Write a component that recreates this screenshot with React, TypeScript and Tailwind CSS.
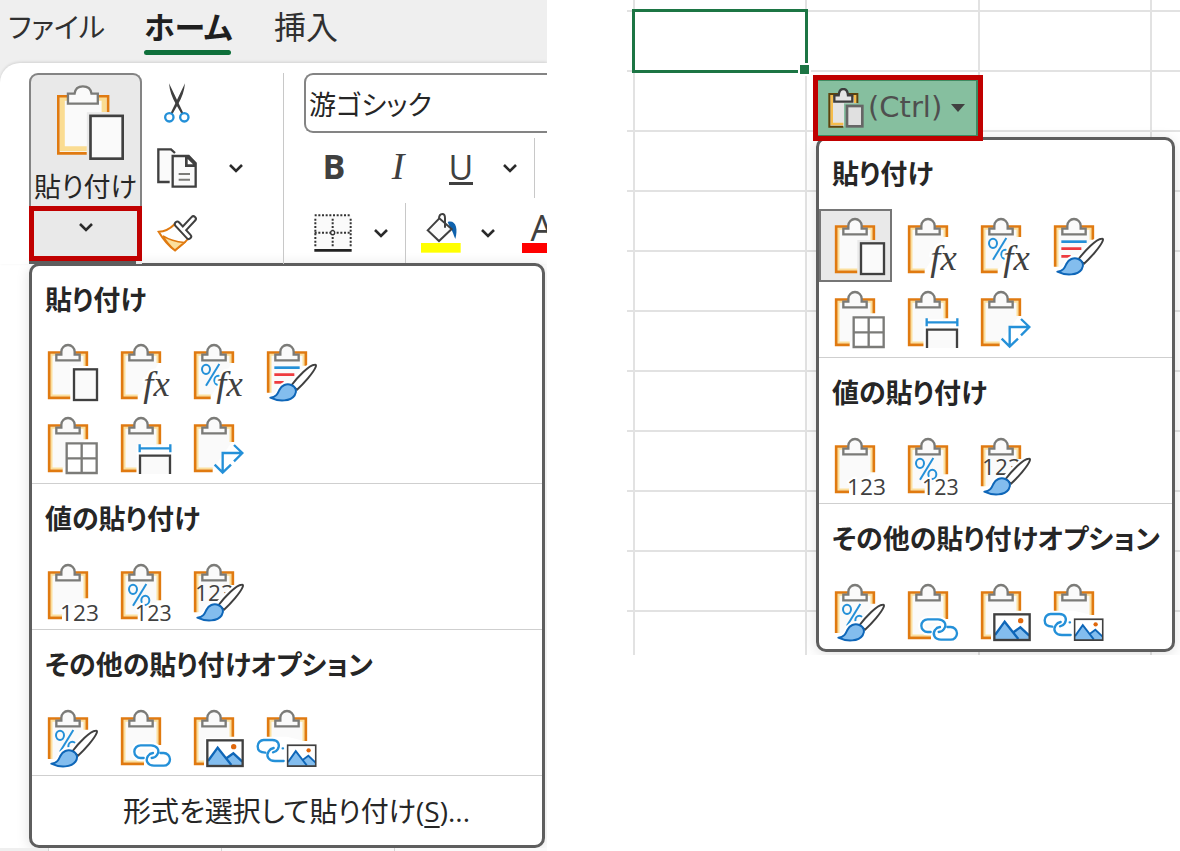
import React from "react";

const ORANGE = "#e07a10";
const YELLOW = "#fbdf9d";
const DARK = "#404040";
const BLUE = "#2490d8";
const GRAY = "#7b7b78";
const PAPER = "#fafafa";

type BoardProps = { right?: number; bottom?: number; left?: number };

function Board({ right = 165, bottom = 0, left = 165 }: BoardProps) {
  const tail = bottom > 0;
  const outer = tail ? `M${bottom} 164.500H3.500V28.500H116.500V${right}` : `M3.500 ${left}V28.500H116.500V${right}`;
  const inner = tail ? `M${bottom} 158H10V35H110V${right}` : `M10 ${left}V35H110V${right}`;
  return (
    <>
      <path d={`M7 ${left}V32H113V${right}L${bottom || 60} ${tail ? 161 : left}Z`} fill={PAPER} />
      <path d={inner} fill="none" stroke={YELLOW} strokeWidth="7" />
      <path d={outer} fill="none" stroke={ORANGE} strokeWidth="8" />
      <path d="M25 52V35H40V26a20 20 0 0 1 40 0V35H95V52Z" fill={PAPER} stroke={GRAY} strokeWidth="7" />
    </>
  );
}

function Brush() {
  return (
    <>
      <path
        d="M8 163C28 162 30 150 36 140C42 126 60 118 72 122L100 92C118 74 138 60 147 66C152 74 136 96 122 110L92 140C90 150 88 155 80 162C62 178 30 174 8 163Z"
        fill="currentColor"
        stroke="currentColor"
        strokeWidth="14"
      />
      <path
        d="M74 126C92 102 126 66 143 65Q149 64 146 72C140 88 110 122 90 140Z"
        fill="#fff"
        stroke={DARK}
        strokeWidth="6"
        strokeLinejoin="round"
      />
      <path
        d="M10 164C28 162 32 152 37 141C43 127 59 120 73 126C87 132 91 145 83 157C71 175 36 177 10 164Z"
        fill="#83bdee"
        stroke="#0e66b8"
        strokeWidth="6"
        strokeLinejoin="round"
      />
    </>
  );
}

function Percent() {
  return (
    <g fill="none" stroke={BLUE} strokeWidth="6">
      <ellipse cx="36" cy="79" rx="12" ry="14" />
      <path d="M76 63L36 128" />
      <ellipse cx="73" cy="112" rx="12" ry="14" />
    </g>
  );
}

function Fx() {
  return (
    <text
      x="67"
      y="160"
      className="font-['Liberation_Serif',serif] italic"
      fontSize="110"
      fill={DARK}
      stroke="currentColor"
      strokeWidth="14"
      paintOrder="stroke"
    >
      fx
    </text>
  );
}

function Digits({ x, y, size }: { x: number; y: number; size: number }) {
  return (
    <text
      x={x}
      y={y}
      className="font-['Open_Sans',sans-serif]"
      fontSize={size}
      fill={DARK}
      stroke="currentColor"
      strokeWidth="12"
      paintOrder="stroke"
    >
      123
    </text>
  );
}

function Chain() {
  return (
    <g fill="none" strokeLinecap="round">
      <g stroke="currentColor" strokeWidth="20">
        <path d="M70 147H59a19 19 0 0 1 0-38H92a19 19 0 0 1 0 38H88" />
        <path d="M116 132H128a19 19 0 0 1 0 38H97a19 19 0 0 1 0-38H100" />
      </g>
      <g stroke={BLUE} strokeWidth="7">
        <path d="M68 147H59a19 19 0 0 1 0-38H90C108 109 118 124 108 138Q103 146 92 147" />
        <path d="M118 132H128a19 19 0 0 1 0 38H99C80 170 72 154 81 141Q86 133 96 132" />
      </g>
    </g>
  );
}

function Landscape() {
  return (
    <>
      <rect x="32" y="86" width="122" height="92" fill="currentColor" />
      <rect x="40" y="94" width="106" height="77" fill="#fff" />
      <path d="M42 158L71 116L98 150L118 133L145 158V170H42Z" fill="#83bdee" />
      <path d="M42 156L71 116L112 168M94 150L118 133L145 158" fill="none" stroke="#0e66b8" strokeWidth="7" />
      <rect x="40" y="94" width="106" height="77" fill="none" stroke={DARK} strokeWidth="7" />
      <circle cx="119" cy="113" r="8" fill="#e0680c" />
    </>
  );
}

type Kind =
  | "paste"
  | "formulas"
  | "formulasNumber"
  | "keepSource"
  | "noBorders"
  | "columnWidths"
  | "transpose"
  | "values"
  | "valuesNumber"
  | "valuesSource"
  | "formatting"
  | "link"
  | "picture"
  | "linkedPicture";

function PasteIcon({ kind }: { kind: Kind }) {
  return (
    <svg viewBox="0 0 150 174" className="h-[58px] w-[50px] overflow-visible" aria-hidden="true">
      {kind === "paste" && (
        <>
          <Board right={69} bottom={68} />
          <rect x="67" y="69" width="85" height="105" fill="currentColor" />
          <rect x="78" y="79" width="69" height="92" fill={PAPER} stroke={DARK} strokeWidth="7" />
        </>
      )}
      {kind === "formulas" && (
        <>
          <Board right={60} bottom={50} />
          <Fx />
        </>
      )}
      {kind === "formulasNumber" && (
        <>
          <Board right={60} bottom={50} />
          <Percent />
          <Fx />
        </>
      )}
      {kind === "keepSource" && (
        <>
          <Board right={68} left={149} />
          <path d="M22 74H98" stroke={BLUE} strokeWidth="8" />
          <path d="M22 95H82M22 118H50" stroke="#ee3b3f" strokeWidth="8" />
          <Brush />
        </>
      )}
      {kind === "noBorders" && (
        <>
          <Board right={70} bottom={44} />
          <path d="M56 82H146V171H56ZM101 82V171M56 127H146" fill="#fff" stroke={GRAY} strokeWidth="7" />
        </>
      )}
      {kind === "columnWidths" && (
        <>
          <Board right={85} bottom={47} />
          <path d="M47 88H106V112H150V174H47Z" fill="currentColor" />
          <path d="M57 174V119H147V174" fill={PAPER} stroke={DARK} strokeWidth="7" />
          <path d="M56 97H148M56 85V109M148 85V109" stroke={BLUE} strokeWidth="7" />
        </>
      )}
      {kind === "transpose" && (
        <>
          <Board right={78} bottom={56} />
          <path d="M86 168V111H146M120 87L145 111L120 136M62 146L86 170L111 146" fill="none" stroke={BLUE} strokeWidth="7" />
        </>
      )}
      {kind === "values" && (
        <>
          <Board right={106} bottom={42} />
          <Digits x={36} y={174} size={68} />
        </>
      )}
      {kind === "valuesNumber" && (
        <>
          <Board right={112} bottom={50} />
          <Percent />
          <Digits x={42} y={174} size={64} />
        </>
      )}
      {kind === "valuesSource" && (
        <>
          <Board right={66} left={148} />
          <text x="3" y="114" className="font-['Open_Sans',sans-serif]" fontSize="68" fill={DARK}>
            123
          </text>
          <Brush />
        </>
      )}
      {kind === "formatting" && (
        <>
          <Board right={62} left={150} />
          <Percent />
          <Brush />
        </>
      )}
      {kind === "link" && (
        <>
          <Board right={108} bottom={69} />
          <Chain />
        </>
      )}
      {kind === "picture" && (
        <>
          <Board right={83} bottom={30} />
          <Landscape />
        </>
      )}
      {kind === "linkedPicture" && (
        <>
          <Board right={96} left={83} />
          <g fill="none" stroke={BLUE} strokeWidth="7" strokeLinecap="round">
            <path d="M-5 131C-22 131-28 122-28 112S-20 93-10 93H16C34 93 40 108 32 121Q28 128 18 130" />
            <path d="M50 156H24C4 156-4 141 5 127Q10 119 20 117M47 118H48" />
          </g>
          <svg x="59" y="106" width="90" height="68" viewBox="37 91 112 83" preserveAspectRatio="none">
            <Landscape />
          </svg>
        </>
      )}
    </svg>
  );
}

const SECTIONS: { title: string; items: { kind: Kind; label: string }[] }[] = [
  {
    title: "貼り付け",
    items: [
      { kind: "paste", label: "貼り付け" },
      { kind: "formulas", label: "数式" },
      { kind: "formulasNumber", label: "数式と数値の書式" },
      { kind: "keepSource", label: "元の書式を保持" },
      { kind: "noBorders", label: "罫線なし" },
      { kind: "columnWidths", label: "元の列幅を保持" },
      { kind: "transpose", label: "行/列の入れ替え" },
    ],
  },
  {
    title: "値の貼り付け",
    items: [
      { kind: "values", label: "値" },
      { kind: "valuesNumber", label: "値と数値の書式" },
      { kind: "valuesSource", label: "値と元の書式" },
    ],
  },
  {
    title: "その他の貼り付けオプション",
    items: [
      { kind: "formatting", label: "書式設定" },
      { kind: "link", label: "リンク貼り付け" },
      { kind: "picture", label: "図" },
      { kind: "linkedPicture", label: "リンクされた図" },
    ],
  },
];

function PasteMenu({ selected, children }: { selected?: Kind; children?: React.ReactNode }) {
  return (
    <div className="rounded-[10px] border-[3px] border-[#5e5e5e] bg-white shadow-[0_2px_14px_rgba(0,0,0,0.12)]">
      {SECTIONS.map((section, index) => (
        <section key={section.title} className={index > 0 ? "border-t border-[#cfcfcf] pb-px" : "pb-[2px]"}>
          <h2
            className={
              index > 0
                ? "flex h-[71px] items-center pl-[13px] text-[27px] font-bold whitespace-nowrap"
                : "flex h-[69px] items-center pl-[13px] text-[27px] font-bold whitespace-nowrap"
            }
          >
            {section.title}
          </h2>
          <div className="grid grid-cols-[repeat(4,73px)]">
            {section.items.map((item) => (
              <button
                key={item.kind}
                type="button"
                aria-label={item.label}
                className={
                  item.kind === selected
                    ? "flex h-[73px] items-center bg-[#e9e9e9] pl-4 text-[#e9e9e9] outline-2 -outline-offset-2 outline-[#767676]"
                    : "flex h-[73px] items-center pl-4 text-white"
                }
              >
                <PasteIcon kind={item.kind} />
              </button>
            ))}
          </div>
        </section>
      ))}
      {children}
    </div>
  );
}

function Chevron() {
  return (
    <svg viewBox="0 0 14 10" className="h-[10px] w-[14px]" aria-hidden="true">
      <path d="M1 2L7 8L13 2" fill="none" stroke="#2b2b2b" strokeWidth="2.600" />
    </svg>
  );
}

function LargePasteIcon() {
  return (
    <svg viewBox="0 0 202 226" className="h-[75px] w-[67px]" aria-hidden="true">
      <path d="M4 34H154V90H97V206H4Z" fill={PAPER} />
      <path d="M90 192H16V40H142V82" fill="none" stroke="#fadc92" strokeWidth="15" />
      <path d="M90 206H4V34H154V82" fill="none" stroke={ORANGE} strokeWidth="8" />
      <path d="M33 56V26H53C55 10 66 4 78 4S102 10 104 26H123V56Z" fill={PAPER} stroke={GRAY} strokeWidth="7" />
      <rect x="90" y="82" width="112" height="144" fill="#e9e9e9" />
      <rect x="101" y="93" width="97" height="129" fill={PAPER} stroke={DARK} strokeWidth="8" />
    </svg>
  );
}

function CutIcon() {
  return (
    <svg viewBox="0 0 78 120" className="h-10 w-[26px]" aria-hidden="true">
      <path d="M15 1L58 90L53 94L35 62Q18 34 15 1Z" fill={DARK} />
      <path d="M63 1L20 90L25 94L43 62Q60 34 63 1Z" fill={DARK} />
      <circle cx="16" cy="103" r="12.500" fill="#fff" stroke={BLUE} strokeWidth="7" />
      <circle cx="61" cy="103" r="12.500" fill="#fff" stroke={BLUE} strokeWidth="7" />
    </svg>
  );
}

function CopyIcon() {
  return (
    <svg viewBox="0 0 120 120" className="size-10" aria-hidden="true">
      <path d="M38 102H4V4H42L54 15" fill={PAPER} stroke={DARK} strokeWidth="7" />
      <path d="M47 24H95L116 46V116H47Z" fill={PAPER} stroke={DARK} strokeWidth="7" />
      <path d="M84 24H95L117 46V57H84Z" fill={DARK} />
      <path d="M92 33V49H108Z" fill="#fff" />
      <path d="M65 78H99M65 95H99" stroke={GRAY} strokeWidth="6" />
    </svg>
  );
}

function PainterIcon() {
  return (
    <svg viewBox="0 0 120 110" className="h-[37px] w-10" aria-hidden="true">
      <path d="M5 50C24 49 40 40 52 28L94 70C80 88 66 94 54 106C34 92 18 72 5 50Z" fill="#fff" stroke={ORANGE} strokeWidth="6" />
      <path d="M18 62C40 76 60 80 82 82L54 105C40 94 28 80 18 62Z" fill={YELLOW} stroke={ORANGE} strokeWidth="5" />
      <g strokeLinecap="round">
        <path d="M61 27L95 64M80 42L109 11" stroke={DARK} strokeWidth="21" />
        <path d="M61 27L95 64M80 42L109 11" stroke="#fff" strokeWidth="9" />
      </g>
    </svg>
  );
}

function BordersIcon() {
  return (
    <svg viewBox="0 0 114 114" className="size-[38px]" aria-hidden="true">
      <rect x="3" y="3" width="108" height="104" fill={PAPER} />
      <path d="M2 4H112M2 56H112" stroke="#333" strokeWidth="6" strokeDasharray="6 5" />
      <path d="M4 14V98M56 14V98M110 14V98" stroke="#333" strokeWidth="6" strokeDasharray="6 5" />
      <circle cx="56" cy="56" r="6" fill="#fff" stroke="#333" strokeWidth="4" />
      <path d="M1 109H113" stroke="#222" strokeWidth="8" />
    </svg>
  );
}

function FillIcon() {
  return (
    <svg viewBox="0 0 120 120" className="size-10" aria-hidden="true">
      <path d="M80 27C104 20 112 46 103 78C97 66 96 56 88 46Z" fill="#0f62ad" />
      <path d="M20 52L55 16L92 48L54 84Z" fill={PAPER} stroke={DARK} strokeWidth="6" />
      <path d="M54 18C54 8 58 3 64 3S72 8 72 16V44" fill="none" stroke={DARK} strokeWidth="6" />
      <rect y="90" width="119" height="29" fill="#ff0" />
    </svg>
  );
}

function SmartTagIcon() {
  return (
    <svg viewBox="0 0 108 120" className="h-10 w-9 shrink-0" aria-hidden="true">
      <path d="M3 18H89V48H50V116H3Z" fill="#e4e4e4" />
      <path d="M46 108H11V24H82V46" fill="none" stroke="#f5bd4c" strokeWidth="8" />
      <path d="M46 116H4V18H88V46" fill="none" stroke="#5d430c" strokeWidth="6" />
      <path d="M19 41V22H32C33 8 38 3 46 3S59 8 60 22H73V41Z" fill="#e4e4e4" stroke="#3d3d3d" strokeWidth="7" />
      <rect x="48" y="46" width="60" height="74" fill="#86bf9f" />
      <rect x="57" y="54" width="46" height="61" fill="#e0e0e0" stroke="#666" strokeWidth="8" />
    </svg>
  );
}

function Ribbon() {
  return (
    <div className="flex overflow-hidden rounded-tl-[20px] bg-white pt-[10px] shadow-[0_-1px_3px_rgba(0,0,0,0.12)]">
      <div className="ml-[29px] flex w-[113px] shrink-0 flex-col rounded-t-[9px] bg-[#e9e9e9]">
        <button
          type="button"
          className="flex h-[133px] flex-col items-center rounded-t-[9px] border-2 border-b-0 border-[#848484] pt-[10px]"
        >
          <span className="pl-[9px]">
            <LargePasteIcon />
          </span>
          <span className="mt-[9px] text-[27px] leading-9 whitespace-nowrap">貼り付け</span>
        </button>
        <button
          type="button"
          aria-label="貼り付けオプション"
          className="flex h-[55px] justify-center border-[5px] border-[#c00000] pt-[11px]"
        >
          <Chevron />
        </button>
        <span className="mr-[6px] h-[3px] bg-[#5e5e5e]" />
      </div>

      <div className="grid shrink-0 grid-cols-[70px_48px] grid-rows-[60px_60px_60px] gap-y-[5px]">
        <button type="button" aria-label="切り取り" className="flex items-center justify-center">
          <CutIcon />
        </button>
        <span />
        <button type="button" aria-label="コピー" className="flex items-center justify-center">
          <CopyIcon />
        </button>
        <button type="button" aria-label="コピーのオプション" className="flex items-center justify-center">
          <Chevron />
        </button>
        <button type="button" aria-label="書式のコピー/貼り付け" className="flex items-center justify-center">
          <PainterIcon />
        </button>
      </div>

      <div className="ml-[23px] w-px shrink-0 self-stretch bg-[#c8c8c8]" />

      <div className="ml-5 flex min-w-0 flex-1 flex-col gap-[5px] overflow-hidden">
        <input
          aria-label="フォント"
          defaultValue="游ゴシック"
          className="h-[60px] w-full rounded-l-[9px] border-2 border-r-0 border-[#848484] bg-white pl-[3px] text-[27px] outline-none"
        />
        <div className="flex h-[60px] items-center font-['Open_Sans',sans-serif] text-[34px] text-[#404040]">
          <button type="button" aria-label="太字" className="w-[60px] shrink-0 pb-1 font-bold">
            B
          </button>
          <button
            type="button"
            aria-label="斜体"
            className="w-[68px] shrink-0 pb-1 font-['Liberation_Serif',serif] text-[38px] italic"
          >
            I
          </button>
          <button type="button" aria-label="下線" className="flex w-[58px] shrink-0 justify-center">
            <span className="border-b-[3px] border-[#404040] leading-[30px]">U</span>
          </button>
          <button type="button" aria-label="下線のオプション" className="flex w-10 shrink-0 justify-center">
            <Chevron />
          </button>
          <div className="ml-1 w-px shrink-0 self-stretch bg-[#c8c8c8]" />
        </div>
        <div className="flex h-[60px] items-center">
          <button type="button" aria-label="罫線" className="flex w-[58px] shrink-0 justify-center">
            <BordersIcon />
          </button>
          <button type="button" aria-label="罫線のオプション" className="flex w-[38px] shrink-0 justify-center">
            <Chevron />
          </button>
          <div className="ml-[5px] w-px shrink-0 self-stretch bg-[#c8c8c8]" />
          <button type="button" aria-label="塗りつぶしの色" className="flex w-[70px] shrink-0 justify-center">
            <FillIcon />
          </button>
          <button type="button" aria-label="塗りつぶしのオプション" className="flex w-6 shrink-0 justify-center">
            <Chevron />
          </button>
          <button
            type="button"
            aria-label="フォントの色"
            className="ml-[22px] flex w-10 shrink-0 flex-col items-center font-['Open_Sans',sans-serif] text-[36px] leading-[30px] text-[#404040]"
          >
            <span>A</span>
            <span className="h-[10px] w-full bg-[#ff0000]" />
          </button>
        </div>
      </div>
    </div>
  );
}

function RibbonPanel() {
  return (
    <div className="min-w-0 overflow-hidden">
      <div className="bg-[#efefef]">
        <nav className="flex h-[63px] pl-2 text-[31px] leading-[54px] whitespace-nowrap text-[#303030]">
          <a href="#file" className="w-[136px] text-[28px]">
            ファイル
          </a>
          <a href="#home" className="flex w-[87px] flex-col font-bold text-[#1f1f1f]">
            <span className="h-[50px]">ホーム</span>
            <span className="h-[5px] rounded-full bg-[#0f703b]" />
          </a>
          <a href="#insert" className="ml-[43px] text-[32px]">
            挿入
          </a>
        </nav>
        <Ribbon />
      </div>
      <div className="-mt-px mr-[2px] ml-[29px]">
        <PasteMenu>
          <button
            type="button"
            className="block h-[70px] w-full border-t border-[#cfcfcf] pl-[91px] text-left text-[28px] whitespace-nowrap"
          >
            形式を選択して貼り付け(<u className="underline decoration-2 underline-offset-4">S</u>)...
          </button>
        </PasteMenu>
      </div>
      <div className="flex h-[3px] gap-px bg-[#d4d4d4]">
        <span className="w-12 bg-[#efefef]" />
        <span className="w-[172px] bg-[#fafafa]" />
        <span className="w-[172px] bg-[#fafafa]" />
        <span className="flex-1 bg-[#fafafa]" />
      </div>
    </div>
  );
}

const ROW_COUNT = 10;

function SheetPanel() {
  return (
    <div className="relative min-w-0 overflow-hidden">
      <table className="w-full table-fixed border-collapse" aria-label="ワークシート">
        <colgroup>
          <col className="w-[7px]" />
          <col className="w-[172px]" />
          <col className="w-[173px]" />
          <col className="w-[172px]" />
          <col />
        </colgroup>
        <tbody>
          <tr className="h-[11px] border-b-2 border-[#e2e2e2]">
            <td className="border-r-2 border-[#e2e2e2] p-0" />
            <td className="border-r-2 border-[#e2e2e2] p-0" />
            <td className="border-r-2 border-[#e2e2e2] p-0" />
            <td className="border-r-2 border-[#e2e2e2] p-0" />
            <td className="p-0" />
          </tr>
          {Array.from({ length: ROW_COUNT }, (_, row) => (
            <tr key={row} className="h-[60px] border-b-2 border-[#e2e2e2]">
              <td className="border-r-2 border-[#e2e2e2] p-0" />
              <td className="relative border-r-2 border-[#e2e2e2] p-0">
                {row === 0 && (
                  <div className="absolute -inset-[3px] border-[3px] border-[#1c7544]">
                    <span className="absolute -right-[6px] -bottom-[6px] size-[13px] border-2 border-white bg-[#1c7544]" />
                  </div>
                )}
              </td>
              <td className="border-r-2 border-[#e2e2e2] p-0" />
              <td className="border-r-2 border-[#e2e2e2] p-0" />
              <td className="p-0" />
            </tr>
          ))}
          <tr className="h-[44px]">
            <td className="border-r-2 border-[#e2e2e2] p-0" />
            <td className="border-r-2 border-[#e2e2e2] p-0" />
            <td className="border-r-2 border-[#e2e2e2] p-0" />
            <td className="border-r-2 border-[#e2e2e2] p-0" />
            <td className="p-0" />
          </tr>
        </tbody>
      </table>

      <div className="absolute top-[75px] right-[5px] left-[186px]">
        <button
          type="button"
          className="relative z-10 flex h-[66px] w-[170px] items-center border-[5px] border-[#c00000] bg-[#86bf9f] pl-[10px] font-['DejaVu_Sans',sans-serif] text-[29px] text-[#4f4f4f] shadow-[inset_-2px_-1px_0_#3f8a62,inset_0_1px_0_#3f8a62]"
        >
          <SmartTagIcon />
          <span className="ml-1">(Ctrl)</span>
          <svg viewBox="0 0 14 8" className="ml-[9px] h-2 w-[14px] shrink-0" aria-hidden="true">
            <path d="M0 0H14L7 8Z" fill="#404040" />
          </svg>
        </button>
        <div className="-mt-1 ml-[3px]">
          <PasteMenu selected="paste" />
        </div>
      </div>
    </div>
  );
}

export default function App() {
  return (
    <main className="grid grid-cols-[547fr_553fr] items-start gap-20 bg-white font-['Open_Sans','Noto_Sans_CJK_JP',sans-serif] text-[#262626] [font-feature-settings:'palt']">
      <RibbonPanel />
      <SheetPanel />
    </main>
  );
}
